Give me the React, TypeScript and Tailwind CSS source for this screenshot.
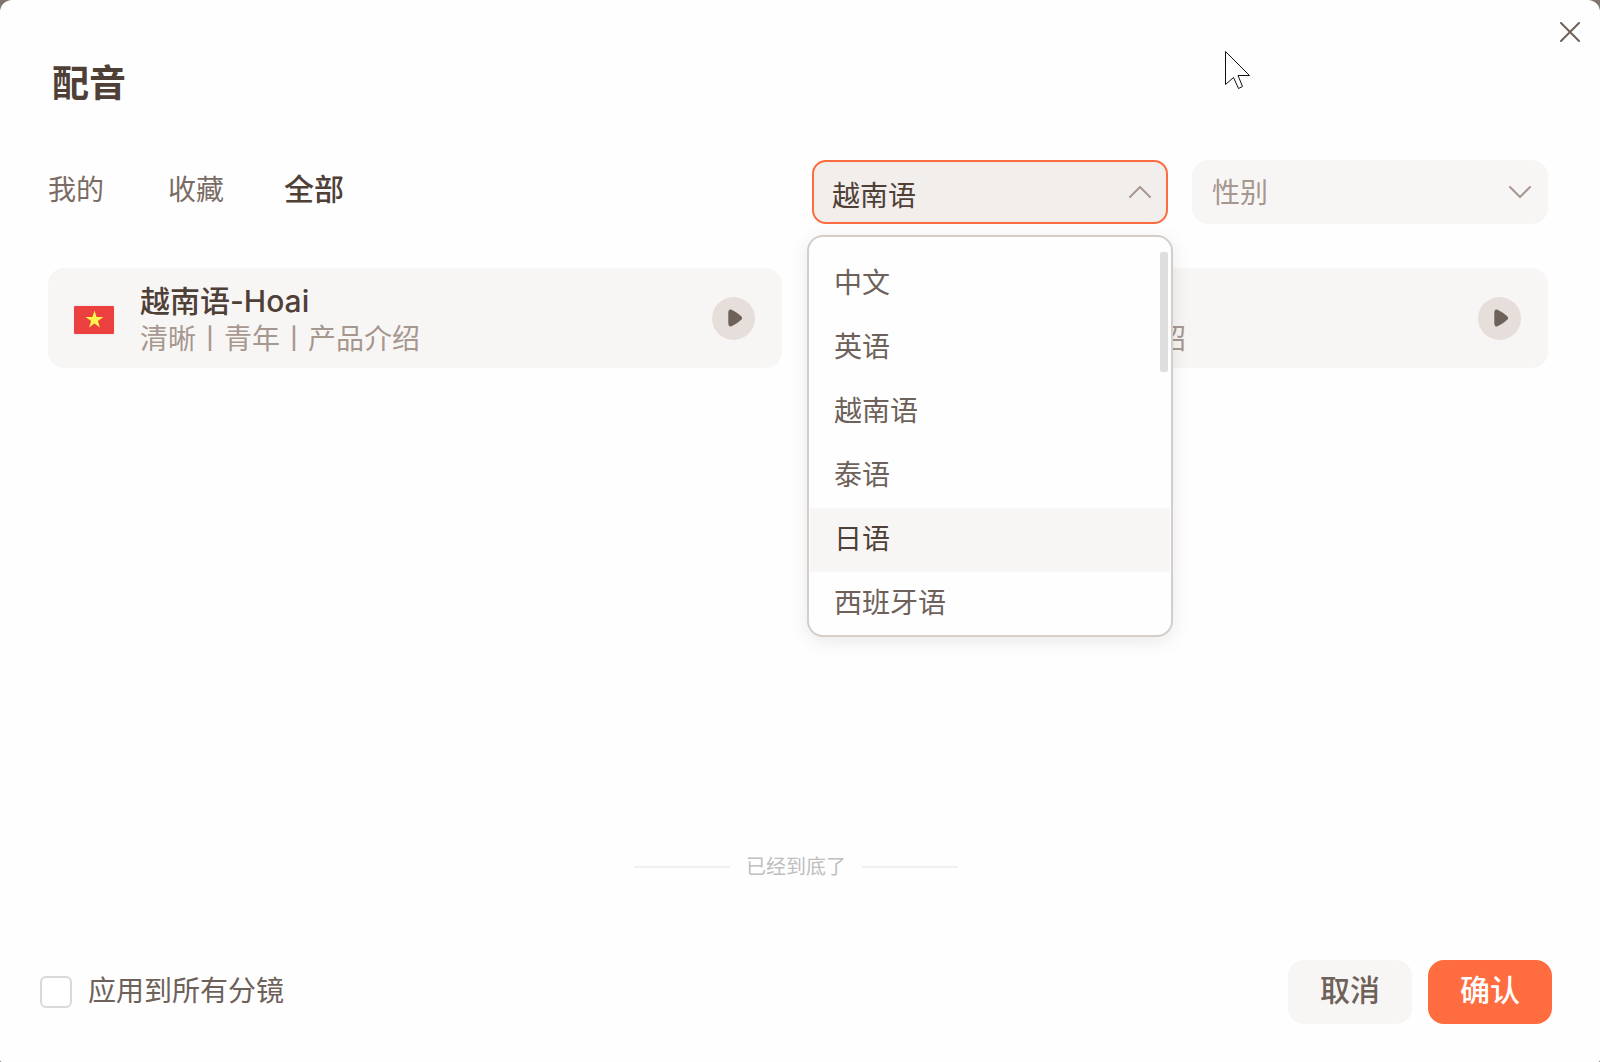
import { useState } from "react";

const languages = ["中文", "英语", "越南语", "泰语", "日语", "西班牙语"];
const genders = ["男", "女"];
const tabs = ["我的", "收藏", "全部"];
const voices = [
  { id: "hoai", name: "越南语-Hoai", tags: "清晰丨青年丨产品介绍" },
  { id: "nam", name: "越南语-Nam", tags: "清晰丨青年丨产品介绍" },
];

function VietnamFlag() {
  return (
    <svg viewBox="0 0 42 32" className="h-8 w-[42px] shrink-0" aria-hidden="true">
      <rect x="0.5" y="0.5" width="41" height="31" rx="2" fill="#f1efef" />
      <rect x="1" y="2" width="40" height="28" rx="1" fill="#ec4040" />
      <path
        d="M21.5 6.5l2.1 6.5h6.8l-5.5 4 2.1 6.500-5.500-4-5.500 4 2.100-6.500-5.500-4h6.800z"
        fill="#fff44c"
      />
    </svg>
  );
}

function Chevron({ up = false }: { up?: boolean }) {
  return (
    <svg
      viewBox="0 0 24 14"
      className="pointer-events-none absolute top-[25px] right-4 h-[14px] w-6"
      fill="none"
      stroke="#a6978f"
      strokeWidth="2"
      strokeLinecap="round"
      strokeLinejoin="round"
      aria-hidden="true"
    >
      {up ? <path d="M2 12 L12 2 L22 12" /> : <path d="M2 2 L12 12 L22 2" />}
    </svg>
  );
}

function VoiceCard({ name, tags }: { name: string; tags: string }) {
  return (
    <li className="flex h-[100px] items-center rounded-2xl bg-[#f8f6f5] pr-[27px] pl-[25px]">
      <div className="flex min-w-0 flex-1 items-center gap-[25px] pt-1">
        <VietnamFlag />
        <div className="min-w-0 flex-1">
          <h2 className="truncate text-[30px] leading-[38px] font-medium text-[#4f4037]">{name}</h2>
          <p className="truncate text-[28px] leading-[38px] text-[#a6978f]">{tags}</p>
        </div>
      </div>
      <button
        type="button"
        aria-label={`播放 ${name}`}
        className="flex size-[43px] shrink-0 items-center justify-center rounded-full bg-[#e6dedb]"
      >
        <svg viewBox="0 0 16 18" className="ml-[3px] h-[18px] w-4" aria-hidden="true">
          <path
            d="M4.500 0.700 C2.500 0 1.400 1 1.300 4 V14 C1.400 17 2.500 18 4.500 17.200 C8.500 15.300 11.500 13.200 14.200 10.700 C15.500 9.500 15.500 8.500 14.200 7.200 C11.500 4.700 8.500 2.600 4.500 0.700z"
            fill="#6d615a"
          />
        </svg>
      </button>
    </li>
  );
}

export default function App() {
  const [tab, setTab] = useState("全部");
  const [language, setLanguage] = useState("越南语");
  const [gender, setGender] = useState("");
  const [open, setOpen] = useState(true);
  const [active, setActive] = useState("日语");

  return (
    <div className="min-h-screen bg-[#80736c] font-[Inter,'Noto_Sans_CJK_SC',sans-serif] text-[28px] text-[#6d615a]">
      <div
        role="dialog"
        aria-labelledby="dialog-title"
        className="relative flex min-h-screen flex-col rounded-t-xl rounded-b-[2px] bg-[#fefefe] pb-[38px]"
      >
        <header className="flex h-40 items-start justify-between pt-3 pr-[10px] pl-[52px]">
          <h1 id="dialog-title" className="pt-11 text-[37px] leading-[56px] font-bold text-[#4f4037]">
            配音
          </h1>
          <button type="button" aria-label="关闭" className="flex size-10 items-center justify-center">
            <svg viewBox="0 0 20 20" className="size-5" stroke="#6d615a" strokeWidth="2" strokeLinecap="round" aria-hidden="true">
              <path d="M1 1 L19 19 M19 1 L1 19" />
            </svg>
          </button>
        </header>

        <div className="flex h-16 items-center justify-between pr-[52px] pl-12">
          <nav className="flex items-center gap-16 pb-1">
            {tabs.map((t) => (
              <button
                key={t}
                type="button"
                onClick={() => setTab(t)}
                className={
                  t === tab
                    ? "-ml-1 pb-0.5 text-[30px] leading-10 font-medium text-[#4f4037]"
                    : "leading-10 text-[#7a6c65]"
                }
              >
                {t}
              </button>
            ))}
          </nav>

          <div className="flex gap-6">
            <div className="relative w-[356px]">
              <select
                aria-label="语言"
                value={language}
                onMouseDown={(e) => {
                  e.preventDefault();
                  setOpen(!open);
                }}
                onChange={(e) => setLanguage(e.target.value)}
                className="h-16 w-full appearance-none rounded-[14px] border-2 border-[#ff6c3f] bg-[#f2eeeb] pt-2 pl-[18px] text-[#4f4037] outline-none"
              >
                {languages.map((l) => (
                  <option key={l}>{l}</option>
                ))}
              </select>
              <Chevron up />
              {open && (
                <div className="absolute top-[75px] -right-[5px] -left-[5px] z-10 h-[402px] overflow-hidden rounded-2xl border-2 border-[#d5cdc9] bg-[#fefefe] px-px pt-[15px] shadow-[0_4px_20px_rgba(0,0,0,0.09)]">
                  <ul role="listbox" aria-label="语言选项">
                    {languages.map((l) => (
                      <li
                        key={l}
                        role="option"
                        aria-selected={l === language}
                        onMouseEnter={() => setActive(l)}
                        onClick={() => {
                          setLanguage(l);
                          setOpen(false);
                        }}
                        className={
                          l === active
                            ? "h-16 bg-[#f8f6f5] pl-6 leading-[62px] text-[#4f4037]"
                            : "h-16 pl-6 leading-[62px]"
                        }
                      >
                        {l}
                      </li>
                    ))}
                  </ul>
                  <div className="absolute top-[15px] right-[3px] h-[120px] w-2 rounded-[2px] bg-[#dedede]" />
                </div>
              )}
            </div>

            <div className="relative w-[356px]">
              <select
                aria-label="性别"
                value={gender}
                onChange={(e) => setGender(e.target.value)}
                className="h-16 w-full appearance-none rounded-2xl bg-[#f8f6f5] pt-0.5 pl-5 text-[#a6978f] outline-none"
              >
                <option value="">性别</option>
                {genders.map((g) => (
                  <option key={g}>{g}</option>
                ))}
              </select>
              <Chevron />
            </div>
          </div>
        </div>

        <main className="flex flex-1 flex-col justify-between pt-11 pr-[52px] pl-12">
          <ul className="grid grid-cols-2 gap-8">
            {voices.map((v) => (
              <VoiceCard key={v.id} name={v.name} tags={v.tags} />
            ))}
          </ul>
          <div className="flex items-center justify-center gap-4 pr-1">
            <span className="h-0.5 w-24 bg-[#f0f0f0]" />
            <p className="text-[20px] leading-7 text-[#bfbfbf]">已经到底了</p>
            <span className="h-0.5 w-24 bg-[#f0f0f0]" />
          </div>
        </main>

        <footer className="mt-[79px] flex h-16 items-center justify-between pr-12 pl-10">
          <label className="flex items-center gap-4">
            <input
              type="checkbox"
              className="size-8 appearance-none rounded-md border-2 border-[#d9d9d9] bg-white checked:border-[#ff6c3f] checked:bg-[#ff6c3f]"
            />
            <span className="pb-0.5 leading-10">应用到所有分镜</span>
          </label>
          <div className="flex gap-4 text-[30px] font-medium">
            <button type="button" className="h-16 w-[124px] rounded-2xl bg-[#f8f6f5] pb-1">
              取消
            </button>
            <button type="button" className="h-16 w-[124px] rounded-2xl bg-[#ff6c3f] pb-1 text-white">
              确认
            </button>
          </div>
        </footer>

        <svg
          viewBox="0 0 26 39"
          className="pointer-events-none absolute top-[51px] right-[349px] h-[39px] w-[26px]"
          aria-hidden="true"
        >
          <path
            d="M0.500 0.500 V33.500 L8.500 26.500 L13.500 37.500 L17.500 35.500 L13 24.500 H24.500 Z"
            fill="#fff"
            stroke="#111"
            strokeWidth="1"
          />
        </svg>
      </div>
    </div>
  );
}
